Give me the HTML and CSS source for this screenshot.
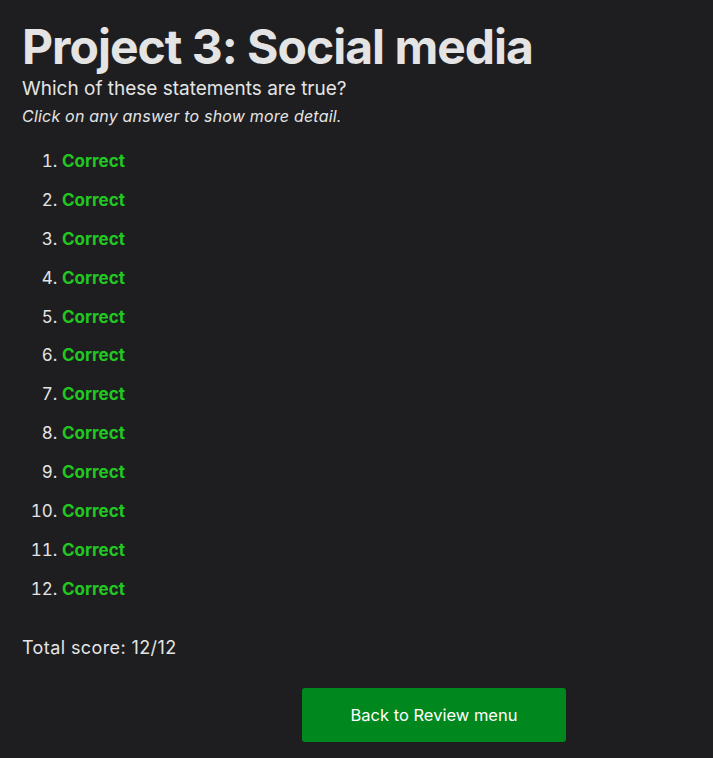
FILE: index.html
```html
<!DOCTYPE html>
<html>
<head>
<meta charset="utf-8">
<link rel="stylesheet" href="styles.css">
</head>
<body>
<main class="page">
  <h1 class="title">Project 3: Social media</h1>
  <p class="question">Which of these statements are true?</p>
  <p class="hint">Click on any answer to show more detail.</p>
  <ol class="answers">
    <li><span class="correct">Correct</span></li>
    <li><span class="correct">Correct</span></li>
    <li><span class="correct">Correct</span></li>
    <li><span class="correct">Correct</span></li>
    <li><span class="correct">Correct</span></li>
    <li><span class="correct">Correct</span></li>
    <li><span class="correct">Correct</span></li>
    <li><span class="correct">Correct</span></li>
    <li><span class="correct">Correct</span></li>
    <li><span class="correct">Correct</span></li>
    <li><span class="correct">Correct</span></li>
    <li><span class="correct">Correct</span></li>
  </ol>
  <p class="score">Total score: 12/12</p>
  <button class="back">Back to Review menu</button>
</main>
</body>
</html>
```
FILE: styles.css
```css
html, body {
  margin: 0;
  background: #1e1e20;
}
body {
  font-family: Inter, "Noto Sans", sans-serif;
  color: #e4e4e4;
}
.page {
  padding: 18px 22px 0 22px;
}
.title {
  margin: 0;
  font-size: 48px;
  font-weight: 700;
  line-height: 58px;
  letter-spacing: -1px;
}
.question {
  margin: 0;
  font-size: 19px;
  line-height: 26px;
}
.hint {
  margin: 2px 0 0 0;
  font-size: 16px;
  font-style: italic;
  line-height: 24px;
  letter-spacing: 0.2px;
}
.answers {
  margin: 21px 0 0 0;
  padding-left: 40px;
  font-size: 17px;
}
.answers li {
  line-height: 24px;
  margin-bottom: 14.9px;
}
.correct {
  color: #21c821;
  font-weight: 700;
}
.score {
  margin: 35px 0 0 0;
  font-size: 18px;
  line-height: 24px;
  letter-spacing: 0.4px;
}
.back {
  display: block;
  margin: 28px 0 0 280px;
  width: 264px;
  height: 54px;
  border: none;
  border-radius: 3px;
  background: #00881e;
  color: #fff;
  font-family: Inter, "Noto Sans", sans-serif;
  font-size: 16.5px;
}
```
